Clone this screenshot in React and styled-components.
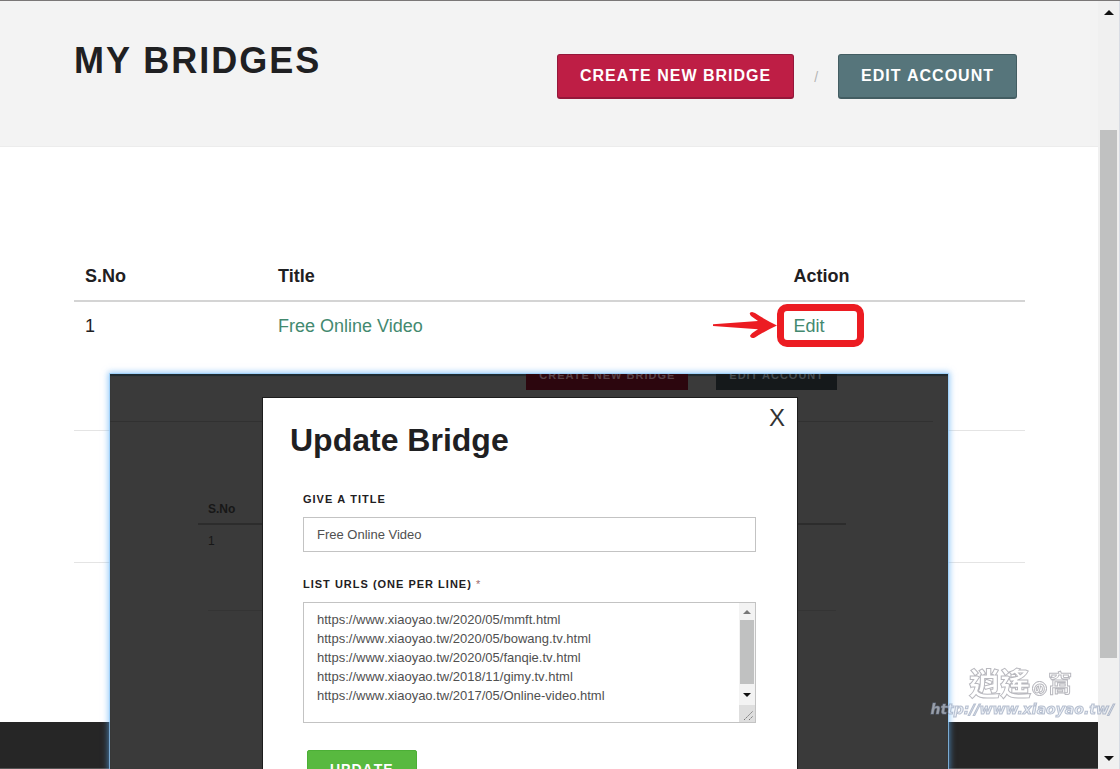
import React from "react";
import styled, { createGlobalStyle } from "styled-components";

const GlobalStyle = createGlobalStyle`
  *, *::before, *::after { box-sizing: border-box; }
  body {
    margin: 0;
    background: #fff;
    color: #1f2022;
    font-family: "Liberation Sans", Arial, sans-serif;
    font-size: 18px;
  }
  button, input, textarea { font-family: inherit; }
`;

const Shell = styled.div`
  display: flex;
  height: 100vh;
  overflow: hidden;
  border-top: 1px solid #7a7777;
`;

const Page = styled.main`
  position: relative;
  flex: 1;
  min-width: 0;
  display: flex;
  flex-direction: column;
  overflow: hidden;
`;

const Header = styled.header`
  display: flex;
  flex: none;
  align-items: flex-start;
  justify-content: space-between;
  min-height: 146px;
  padding: 36px 81px 0 74px;
  background: #f3f3f3;
  border-bottom: 1px solid #ececec;
`;

const PageTitle = styled.h1`
  margin: 0;
  font-size: 36px;
  line-height: 48px;
  letter-spacing: 2px;
  white-space: nowrap;
`;

const Actions = styled.div`
  display: flex;
  align-items: center;
  gap: 20px;
  margin-top: 17px;
  color: #b5b5b5;
  font-size: 14px;
`;

const Button = styled.button`
  height: 45px;
  padding: 0 22px;
  border: 1px solid ${(p) => p.$edge};
  border-bottom-width: 2px;
  border-radius: 3px;
  background: ${(p) => p.$fill};
  color: #fff;
  font-size: 16px;
  font-weight: bold;
  font-kerning: none;
  letter-spacing: 1px;
  white-space: nowrap;
`;

const Content = styled.section`
  flex: 1;
  padding: 104px 73px 0 74px;
`;

const Table = styled.table`
  width: 100%;
  table-layout: fixed;
  border-collapse: separate;
  border-spacing: 0;
  line-height: 24px;
  text-align: left;

  th, td { padding: 12px 11px; vertical-align: top; }
  th { height: 51px; padding: 13px 11px 12px; border-bottom: 2px solid #d4d4d4; }
  td { border-bottom: 1px solid #e4e4e4; }
  tbody tr:first-child td { height: 129px; }
  tbody tr:last-child td { height: 132px; }
`;

const Col = styled.col`
  width: ${(p) => p.$width};
`;

const TextLink = styled.a`
  color: #43896f;
  text-decoration: none;
`;

const EditCell = styled.span`
  position: relative;
  display: inline-block;
`;

const Callout = styled.span`
  position: absolute;
  top: -10px;
  left: -16px;
  width: 87px;
  height: 43px;
  border: 7px solid #ec1c22;
  border-radius: 10px;
  pointer-events: none;

  svg {
    position: absolute;
    right: 100%;
    top: 0;
    margin-right: 6px;
  }
`;

const Footer = styled.footer`
  flex: none;
  height: 47px;
  background: #262626;
  border-bottom: 1px solid #555;
`;

const Rail = styled.div`
  display: flex;
  flex: none;
  flex-direction: column;
  width: 22px;
  padding: 0 2px;
  background: #f0f0f0;
  border-right: 1px solid #d8dce4;
`;

const RailArrow = styled.svg`
  flex: none;
  display: block;
  width: 10px;
  height: 22px;
  margin: 0 auto;
  fill: #111;
`;

const Space = styled.div`
  flex: ${(p) => p.$grow};
`;

const Thumb = styled.div`
  flex: ${(p) => p.$grow};
  background: #c0c1c1;
`;

const Preview = styled.div`
  position: absolute;
  top: 373px;
  right: 150px;
  bottom: 0;
  left: 110px;
  background: #3a3a3a;
  box-shadow: inset 0 2px 1px #1f2b31, 0 0 0 1px rgba(150, 205, 250, 0.7),
    0 0 6px 2px rgba(90, 170, 245, 0.6);
`;

const Dimmed = styled.div`
  height: 100%;
  overflow: hidden;
  color: #171717;
  font-size: 12px;
`;

const DimHeader = styled.div`
  display: flex;
  align-items: flex-start;
  justify-content: flex-end;
  gap: 28px;
  height: 48px;
  margin-right: 15px;
  padding-right: 96px;
  border-bottom: 1px solid #313131;
`;

const DimButton = styled.span`
  height: 30px;
  margin-top: -14px;
  padding: 0 13px;
  background: ${(p) => p.$fill};
  color: ${(p) => p.$ink};
  font-size: 11px;
  font-weight: bold;
  line-height: 30px;
  letter-spacing: 1px;
`;

const DimList = styled.div`
  margin: 76px 102px 0 88px;
  padding: 0 10px;
`;

const DimHead = styled.div`
  margin: 0 -10px;
  padding: 0 10px 3px;
  font-weight: bold;
  line-height: 22px;
  border-bottom: 2px solid #2c2c2c;
`;

const DimRow = styled.div`
  height: 86px;
  padding-top: 8px;
  line-height: 16px;
  border-bottom: 1px solid #343434;
`;

const Dialog = styled.div`
  position: absolute;
  top: 24px;
  right: 0;
  bottom: 0;
  left: 2px;
  width: 534px;
  max-width: 100%;
  margin: 0 auto;
  padding: 22px 41px 0 40px;
  overflow: hidden;
  background: #fff;
  box-shadow: 0 0 0 1px #1d1d1d;
`;

const DialogTitle = styled.h2`
  margin: 0 0 31px -13px;
  font-size: 32px;
  line-height: 40px;
`;

const CloseButton = styled.button`
  position: absolute;
  top: 5px;
  right: 8px;
  width: 24px;
  height: 30px;
  padding: 0;
  border: 0;
  background: none;
  color: #333;
  font-size: 24px;
  line-height: 30px;
`;

const Field = styled.div`
  display: flex;
  flex-direction: column;
  gap: 10px;
  margin-bottom: ${(p) => p.$after};
  font-size: 11px;
  line-height: 16px;
`;

const Label = styled.label`
  font-weight: bold;
  font-kerning: none;
  letter-spacing: 1px;

  span { color: #a06a6a; font-weight: normal; }
`;

const TextInput = styled.input`
  width: 100%;
  height: 35px;
  padding: 0 13px;
  border: 1px solid #c3c3c3;
  border-radius: 0;
  background: #fff;
  color: #505050;
  font-size: 13px;
`;

const UrlBox = styled.div`
  display: flex;
  height: 121px;
  border: 1px solid #c3c3c3;
`;

const UrlArea = styled.textarea`
  flex: 1;
  min-width: 0;
  padding: 7px 13px;
  border: 0;
  outline: 0;
  overflow: hidden;
  resize: none;
  background: #fff;
  color: #505050;
  font-size: 13px;
  font-kerning: none;
  line-height: 19px;
`;

const MiniRail = styled.div`
  display: flex;
  flex-direction: column;
  width: 16px;
  padding: 0 1px;
  background: #f3f3f3;
`;

const MiniArrow = styled.svg`
  flex: none;
  display: block;
  width: 8px;
  height: ${(p) => p.$height};
  margin: 0 auto;
  fill: ${(p) => p.$ink};
`;

const Grip = styled.svg`
  flex: none;
  display: block;
  width: 16px;
  height: 17px;
  margin: 0 -1px;
  background: #dedede;
`;

const UpdateButton = styled.button`
  display: block;
  height: 38px;
  margin-left: 4px;
  padding: 0 22px;
  border: 1px solid #4caf36;
  border-radius: 2px;
  background: #58b93f;
  color: #fff;
  font-size: 14px;
  font-weight: bold;
  font-kerning: none;
  letter-spacing: 1px;
`;

const Watermark = styled.div`
  position: fixed;
  right: 6px;
  bottom: 51px;
  display: flex;
  flex-direction: column;
  align-items: flex-end;
  pointer-events: none;
`;

const Brand = styled.div`
  display: flex;
  align-items: center;
  margin-right: 42px;
  color: #fff;
  font-family: "Noto Sans CJK TC", sans-serif;
  font-size: 31px;
  font-weight: 900;
  line-height: 36px;
  -webkit-text-stroke: 1px #b8b8be;

  small {
    display: grid;
    place-items: center;
    width: 15px;
    height: 15px;
    margin: 12px 1px 0;
    border: 1px solid #aaaab2;
    border-radius: 50%;
    font-size: 11px;
    line-height: 12px;
  }
  em { font-size: 24px; font-style: normal; font-weight: 500; }
`;

const BrandUrl = styled.div`
  color: rgba(223, 230, 240, 0.6);
  font-family: "DejaVu Sans", sans-serif;
  font-size: 14px;
  font-style: italic;
  font-weight: bold;
  line-height: 18px;
  -webkit-text-stroke: 1px rgba(120, 136, 165, 0.5);
`;

const urls = [
  "https://www.xiaoyao.tw/2020/05/mmft.html",
  "https://www.xiaoyao.tw/2020/05/bowang.tv.html",
  "https://www.xiaoyao.tw/2020/05/fanqie.tv.html",
  "https://www.xiaoyao.tw/2018/11/gimy.tv.html",
  "https://www.xiaoyao.tw/2017/05/Online-video.html",
];

function BridgeTable() {
  return (
    <Table>
      <colgroup>
        <Col $width="20.3%" />
        <Col $width="54.2%" />
        <Col $width="25.5%" />
      </colgroup>
      <thead>
        <tr>
          <th>S.No</th>
          <th>Title</th>
          <th>Action</th>
        </tr>
      </thead>
      <tbody>
        <tr>
          <td>1</td>
          <td><TextLink href="#bridge">Free Online Video</TextLink></td>
          <td>
            <EditCell>
              <TextLink href="#edit">Edit</TextLink>
              <Callout>
                <svg width="66" height="28" viewBox="0 0 66 28" fill="#ec1c22">
                  <path d="M1 13.2 L46 10 L39 5 Q36 1.500 40 1 L43 2 Q52 8 65 14.500 Q53 20 43 26.500 Q39 28 38 25 Q38 23 46 18.200 L1 15 Z" />
                </svg>
              </Callout>
            </EditCell>
          </td>
        </tr>
        <tr>
          <td colSpan={3} />
        </tr>
      </tbody>
    </Table>
  );
}

function UpdateDialog() {
  return (
    <Dialog role="dialog" aria-labelledby="dialog-title">
      <DialogTitle id="dialog-title">Update Bridge</DialogTitle>
      <CloseButton type="button">X</CloseButton>
      <Field $after="24px">
        <Label htmlFor="bridge-title">GIVE A TITLE</Label>
        <TextInput id="bridge-title" defaultValue="Free Online Video" />
      </Field>
      <Field $after="27px">
        <Label htmlFor="bridge-urls">LIST URLS (ONE PER LINE) <span>*</span></Label>
        <UrlBox>
          <UrlArea id="bridge-urls" spellCheck={false} defaultValue={urls.join("\n")} />
          <MiniRail>
            <MiniArrow $height="17px" $ink="#777" viewBox="0 0 8 17"><path d="M4 7 L8 11 H0 Z" /></MiniArrow>
            <Thumb $grow={1} />
            <MiniArrow $height="21px" $ink="#111" viewBox="0 0 8 21"><path d="M0 9 H8 L4 13 Z" /></MiniArrow>
            <Grip viewBox="0 0 16 17">
              <path d="M5 15 L14 6 M10 15 L14 11" stroke="#777" strokeWidth="1" strokeDasharray="2 1" />
            </Grip>
          </MiniRail>
        </UrlBox>
      </Field>
      <UpdateButton type="button">UPDATE</UpdateButton>
    </Dialog>
  );
}

export default function App() {
  return (
    <>
      <GlobalStyle />
      <Shell>
        <Page>
          <Header>
            <PageTitle>MY BRIDGES</PageTitle>
            <Actions>
              <Button type="button" $fill="#be1e45" $edge="#95173a">CREATE NEW BRIDGE</Button>
              <span>/</span>
              <Button type="button" $fill="#56757b" $edge="#435d62">EDIT ACCOUNT</Button>
            </Actions>
          </Header>
          <Content>
            <BridgeTable />
          </Content>
          <Footer />
          <Preview>
            <Dimmed aria-hidden="true">
              <DimHeader>
                <DimButton $fill="#2c060e" $ink="#574046">CREATE NEW BRIDGE</DimButton>
                <DimButton $fill="#15191b" $ink="#454b4e">EDIT ACCOUNT</DimButton>
              </DimHeader>
              <DimList>
                <DimHead>S.No</DimHead>
                <DimRow>1</DimRow>
              </DimList>
            </Dimmed>
            <UpdateDialog />
          </Preview>
        </Page>
        <Rail>
          <RailArrow viewBox="0 0 10 22"><path d="M5 9 L10 14 H0 Z" /></RailArrow>
          <Space $grow={107} />
          <Thumb $grow={528} />
          <Space $grow={89} />
          <RailArrow viewBox="0 0 10 22"><path d="M0 9 H10 L5 14 Z" /></RailArrow>
        </Rail>
      </Shell>
      <Watermark>
        <Brand>逍遙<small>の</small><em>窩</em></Brand>
        <BrandUrl>http://www.xiaoyao.tw/</BrandUrl>
      </Watermark>
    </>
  );
}
